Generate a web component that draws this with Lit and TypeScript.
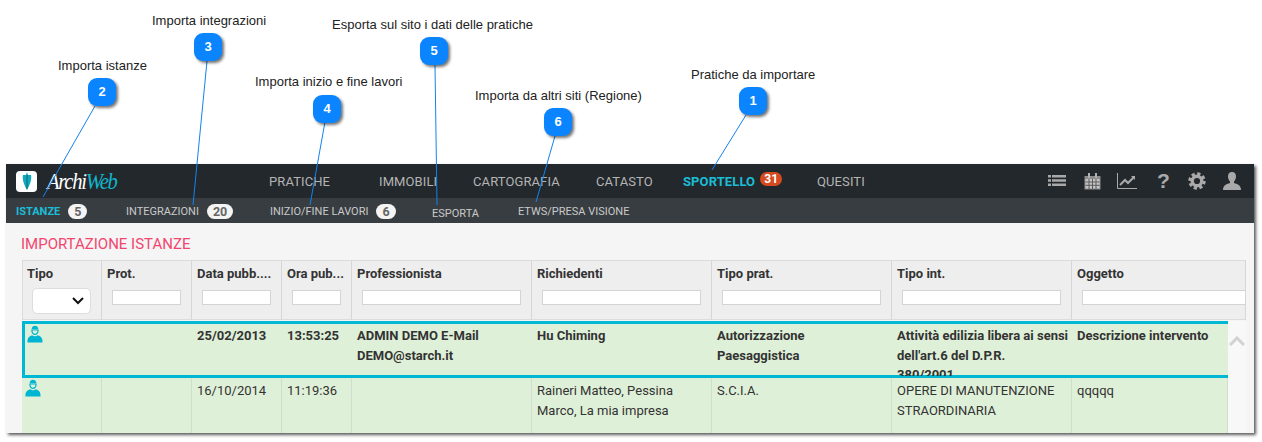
import { LitElement, html, css, svg } from "lit";
import { customElement } from "lit/decorators.js";

const callouts = [
  { n: 2, x: 88, y: 78, label: "Importa istanze", lx: 58, ly: 58 },
  { n: 3, x: 194, y: 33, label: "Importa integrazioni", lx: 152, ly: 13 },
  { n: 4, x: 313, y: 95, label: "Importa inizio e fine lavori", lx: 255, ly: 74 },
  { n: 5, x: 420, y: 37, label: "Esporta sul sito i dati delle pratiche", lx: 332, ly: 17 },
  { n: 6, x: 544, y: 108, label: "Importa da altri siti (Regione)", lx: 475, ly: 88 },
  { n: 1, x: 739, y: 87, label: "Pratiche da importare", lx: 691, ly: 67 },
];
const lines = [
  [95, 106, 43, 197],
  [207, 61, 193, 205],
  [325, 122, 310, 205],
  [435, 65, 437, 205],
  [555, 136, 536, 202],
  [746, 115, 712, 170],
];
const heads = ["Prot.", "Data pubb....", "Ora pub...", "Professionista", "Richiedenti", "Tipo prat.", "Tipo int.", "Oggetto"];
const row1 = ["", "25/02/2013", "13:53:25", "ADMIN DEMO E-Mail\nDEMO@starch.it", "Hu Chiming", "Autorizzazione\nPaesaggistica", "Attività edilizia libera ai sensi\ndell'art.6 del D.P.R.\n380/2001.", "Descrizione intervento"];
const row2 = ["", "16/10/2014", "11:19:36", "", "Raineri Matteo, Pessina\nMarco, La mia impresa", "S.C.I.A.", "OPERE DI MANUTENZIONE\nSTRAORDINARIA", "qqqqq"];

const person = html`<svg class="person" viewBox="0 0 16 18" width="16" height="18">
  <path d="M4.600 4.200C5 1.800 6.400.8 8 .8s3 1 3.400 3.400z" fill="#00b5d1"/>
  <path d="M4.900 5h6.200c.1 2.400-1.200 4.400-3.100 4.400S4.800 7.400 4.900 5z" fill="none" stroke="#00b5d1" stroke-width="1.200"/>
  <path d="M.5 17.500c-.3-4 1.200-6 4.700-7.200 1.500 1.300 4.100 1.300 5.600 0 3.500 1.200 5 3.200 4.700 7.200z" fill="#00b5d1"/>
</svg>`;

@customElement("app-root")
export class AppRoot extends LitElement {
  static styles = css`
    :host { display: block; position: relative; width: 1262px; height: 442px; overflow: hidden; background: #fff; font-family: Roboto, sans-serif; }
    .stage { padding: 164px 0 0 6px; }
    .win { width: 1248px; height: 269px; overflow: hidden; background: #f5f5f5; box-shadow: 2px 2px 3px rgba(0,0,0,.65); }
    .top { height: 34px; background: #23282c; display: flex; align-items: center; color: #b4b4b4; }
    .logo { display: flex; align-items: center; width: 263px; padding-left: 10px; box-sizing: border-box; }
    .mark { width: 21px; height: 21px; border-radius: 4px; background: #fff; display: flex; align-items: center; justify-content: center; }
    .brand { margin-left: 10px; font: italic 24px "Liberation Serif", serif; letter-spacing: -1.500px; color: #fff; transform: scaleX(.86); transform-origin: left; }
    .brand span { color: #12b5cb; }
    .nav { display: grid; grid-template-columns: 110px 94px 123px 87px 134px auto; flex: 1; font-size: 13px; align-items: center; letter-spacing: .1px; }
    .active { color: #1cbdd6; font-weight: 700; display: flex; align-items: center; }
    .hot { background: #d64a20; color: #fff; font-size: 12px; font-weight: 700; border-radius: 7px; padding: 0 4px; height: 14px; line-height: 14px; margin: -5px 0 0 5px; }
    .tools { display: flex; align-items: center; padding-right: 13px; }
    .tools svg { display: block; }
    .t2 { margin-left: 18px; }
    .t3 { margin-left: 16px; }
    .t4 { margin-left: 20px; }
    .t5 { margin-left: 19px; }
    .t6 { margin-left: 17px; }
    .q { font: 700 21px/20px "Liberation Sans", sans-serif; width: 12px; text-align: center; color: #a9a9a9; }
    .sub { height: 25px; background: #383d42; display: grid; grid-template-columns: 110px 144px 162px 86px auto; padding: 1px 0 0 10px; box-sizing: border-box; align-items: center; font-size: 11px; color: #c9c9c9; }
    .sub > div { display: flex; align-items: center; }
    .sub .on { color: #1cbdd6; font-weight: 700; }
    .pill { background: #f4f4f4; color: #666; font-weight: 700; font-size: 12.500px; border-radius: 8px; height: 15px; line-height: 15px; padding: 0 6px; margin-left: 8px; }
    .low { padding-top: 4px; }
    .title { color: #f2456f; font-size: 15px; line-height: 18px; padding: 12px 0 0 15px; height: 37px; box-sizing: border-box; }
    .table { margin-left: 16px; width: 1224px; }
    .cols { display: grid; grid-template-columns: 80px 90px 90px 70px 180px 180px 180px 180px 174px; }
    .head { height: 60px; background: #eee; box-shadow: inset 1px 0 0 #dcdcdc, inset 0 1px 0 #dcdcdc, inset 0 -1px 0 #dcdcdc; }
    .hc { border-right: 1px solid #d6d6d6; padding: 6px 0 0 5px; font-size: 13px; font-weight: 700; color: #333; line-height: 16px; overflow: hidden; box-sizing: border-box; white-space: nowrap; min-width: 0; }
    .hc input { display: block; box-sizing: border-box; width: calc(100% - 15px); min-width: 0; height: 15px; margin: 8px 0 0 5px; padding: 0; border: 1px solid #d4d4d4; background: #fff; }
    .hc:last-child input { width: 170px; }
    .sel { width: 59px; height: 26px; margin: 6px 0 0 5px; background: #fff; border: 1px solid #ddd; border-radius: 5px; box-sizing: border-box; display: flex; align-items: center; justify-content: flex-end; padding-right: 6px; }
    .body { display: flex; margin-top: 1px; }
    .rows { width: 1206px; }
    .scroll { width: 18px; background: #f8f8f8; display: flex; justify-content: center; padding-top: 15px; box-sizing: border-box; height: 115px; }
    .rows .cols { grid-template-columns: 80px 90px 90px 70px 180px 180px 180px 180px 156px; background: #dff0d8; font-size: 13px; line-height: 19.500px; color: #333; overflow: hidden; box-sizing: border-box; }
    .r1 { height: 57px; font-weight: 700; box-shadow: inset 3px 0 0 #00b8d4, inset 0 3px 0 #00b8d4, inset 0 -3px 0 #00b8d4; }
    .r2 { height: 56px; }
    .cell { padding: 5px 2px 0 5px; box-sizing: border-box; min-width: 0; height: 100%; overflow: hidden; white-space: pre-line; }
    .r1 .cell { height: 55px; }
    .r2 .cell { padding-top: 3px; border-right: 1px solid #d3ddcf; }
    .r1 .ic { padding: 4px 0 0 5px; }
    .r2 .ic { padding: 1px 0 0 3px; }
    .person { display: block; }
    .ann { position: absolute; left: 0; top: 0; pointer-events: none; }
    .wires { position: absolute; left: 0; top: 0; }
    .co { position: absolute; width: 28px; height: 28px; border-radius: 9px; background: #0a84ff; color: #fff; font: 700 13px/28px "Liberation Sans", sans-serif; text-align: center; box-shadow: 2px 2px 3px rgba(0,0,0,.55); }
    .lb { position: absolute; font: 13px/16px "Liberation Sans", sans-serif; color: #222; white-space: nowrap; }
  `;

  render() {
    return html`
      <div class="stage">
        <div class="win">
          <div class="top">
            <div class="logo">
              <div class="mark">
                <svg width="10" height="18" viewBox="0 0 10 18"><path d="M5 0l1 3h3c1 4-1 10-4 15C2 13 0 7 1 3h3z" fill="#12a9bd"/><path d="M5 3v14" stroke="#0c5a66" stroke-width=".8"/></svg>
              </div>
              <div class="brand">Archi<span>Web</span></div>
            </div>
            <div class="nav">
              <div>PRATICHE</div><div>IMMOBILI</div><div>CARTOGRAFIA</div><div>CATASTO</div>
              <div class="active">SPORTELLO<span class="hot">31</span></div>
              <div>QUESITI</div>
            </div>
            <div class="tools">
              <svg class="t1" width="18" height="14" viewBox="0 0 18 14" fill="#a9a9a9"><path d="M0 1h3v2.500H0zM4 1h14v2.500H4zM0 5.300h3v2.500H0zM4 5.300h14v2.500H4zM0 9.600h3v2.500H0zM4 9.600h14v2.500H4z"/></svg>
              <svg class="t2" width="17" height="17" viewBox="0 0 17 17"><path d="M.5 3h16v13.500H.5z" fill="#8d8d8d"/><path d="M1.500 6h14v9.500h-14z" fill="#c4c4c4"/><path d="M4 0h2v5H4zM11 0h2v5h-2z" fill="#b0b0b0"/><path d="M5 6v10M8.500 6v10M12 6v10M1.500 9h14M1.500 12.300h14" stroke="#5c5c5c"/></svg>
              <svg class="t3" width="20" height="16" viewBox="0 0 20 16" fill="none" stroke="#a9a9a9"><path d="M.5 0v15.500H20"/><path d="M3 12l5-5 3 3 6-6" stroke-width="2"/><path d="M14 3h4v4z" fill="#a9a9a9" stroke="none"/></svg>
              <div class="q t4">?</div>
              <svg class="t5" width="18" height="18" viewBox="0 0 18 18" fill="none" stroke="#a9a9a9"><circle cx="9" cy="9" r="4.800" stroke-width="3.400"/><circle cx="9" cy="9" r="7.200" stroke-width="3" stroke-dasharray="3.200 2.450"/></svg>
              <svg class="t6" width="18" height="18" viewBox="0 0 18 18" fill="#a9a9a9"><path d="M9 0c2.800 0 4 2 4 4.500 0 2-.8 3.800-2 5v1.500c3 1 7 2 7 7H0c0-5 4-6 7-7V9.500C5.800 8.300 5 6.500 5 4.500 5 2 6.200 0 9 0z"/></svg>
            </div>
          </div>
          <div class="sub">
            <div class="on">ISTANZE<span class="pill">5</span></div>
            <div>INTEGRAZIONI<span class="pill">20</span></div>
            <div>INIZIO/FINE LAVORI<span class="pill">6</span></div>
            <div class="low">ESPORTA</div>
            <div>ETWS/PRESA VISIONE</div>
          </div>
          <div class="title">IMPORTAZIONE ISTANZE</div>
          <div class="table">
            <div class="cols head">
              <div class="hc">Tipo
                <div class="sel"><svg width="12" height="8" viewBox="0 0 12 8" fill="none" stroke="#111" stroke-width="2"><path d="M1 1l5 5 5-5"/></svg></div>
              </div>
              ${heads.map((h) => html`<div class="hc">${h}<input /></div>`)}
            </div>
            <div class="body">
              <div class="rows">
                <div class="cols r1"><div class="cell ic">${person}</div>${row1.map((c) => html`<div class="cell">${c}</div>`)}</div>
                <div class="cols r2"><div class="cell ic">${person}</div>${row2.map((c) => html`<div class="cell">${c}</div>`)}</div>
              </div>
              <div class="scroll"><svg width="16" height="10" viewBox="0 0 16 10" fill="none" stroke="#d2d2d2" stroke-width="3"><path d="M1 9l7-7 7 7"/></svg></div>
            </div>
          </div>
        </div>
      </div>
      <div class="ann">
        <svg class="wires" width="1262" height="442" stroke="#1283f0" stroke-width="1">
          ${lines.map((l) => svg`<line x1=${l[0]} y1=${l[1]} x2=${l[2]} y2=${l[3]} />`)}
        </svg>
        ${callouts.map((c) => html`
          <div class="lb" style="left:${c.lx}px;top:${c.ly}px">${c.label}</div>
          <div class="co" style="left:${c.x}px;top:${c.y}px">${c.n}</div>`)}
      </div>
    `;
  }
}
